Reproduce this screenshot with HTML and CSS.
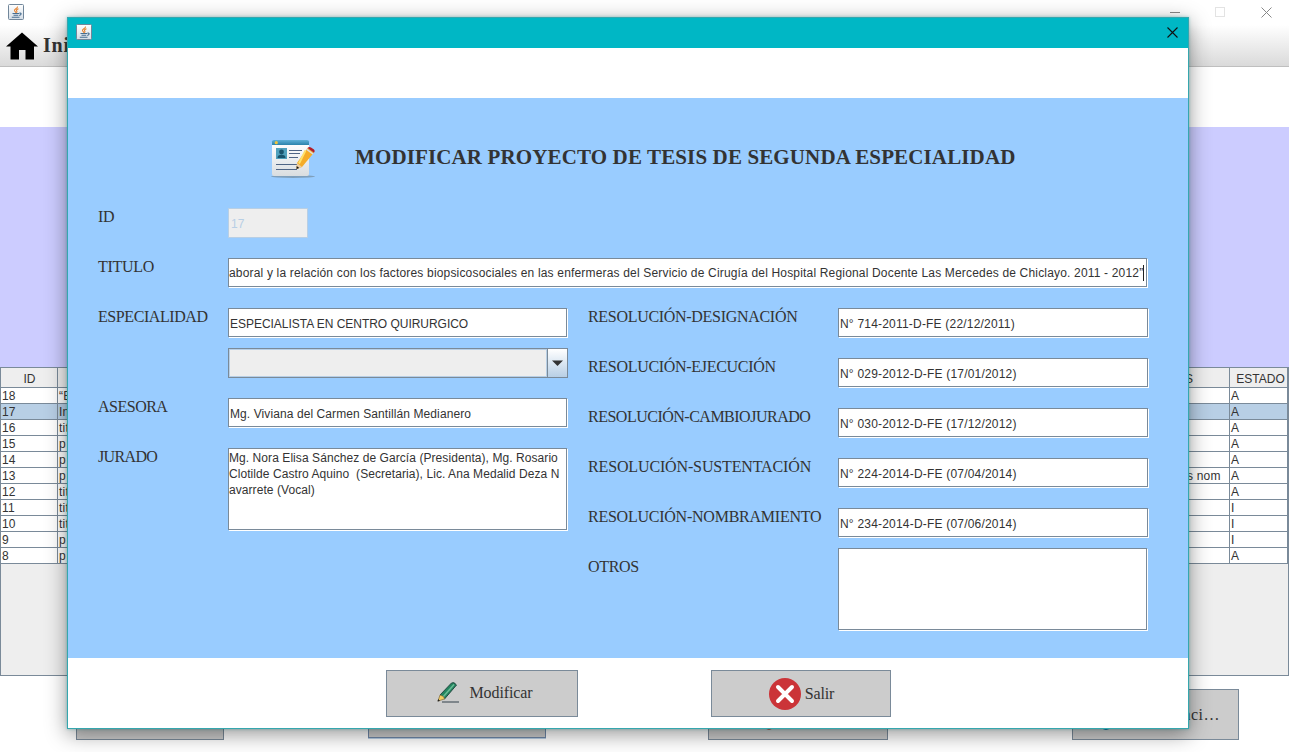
FILE: index.html
```html
<!DOCTYPE html>
<html lang="es">
<head>
<meta charset="utf-8">
<title>Modificar proyecto de tesis</title>
<link rel="stylesheet" href="styles.css">
</head>
<body>
<svg class="defs" width="0" height="0">
  <defs>
    <linearGradient id="cup" x1="0" y1="0" x2="0" y2="1"><stop offset="0" stop-color="#fff"/><stop offset="1" stop-color="#d4dde6"/></linearGradient>
    <linearGradient id="card" x1="0" y1="0" x2="0" y2="1"><stop offset="0" stop-color="#fff"/><stop offset="1" stop-color="#d9dde0"/></linearGradient>
    <linearGradient id="bar" x1="0" y1="0" x2="0" y2="1"><stop offset="0" stop-color="#5fb0d8"/><stop offset="1" stop-color="#2b83ab"/></linearGradient>
    <symbol id="java" viewBox="0 0 16 16">
      <rect x=".5" y=".5" width="15" height="15" rx="1" fill="url(#cup)" stroke="#71869a"/>
      <path d="M9.5 2.5C10 4.500 6 5 6.500 6.500C6.700 7.500 8 8 8 9M10.500 4.800C8.500 5.500 8 6.300 8.800 7C9.300 7.600 8.900 8 8.500 8.500" fill="none" stroke="#e5812f" stroke-width="1.100"/>
      <path d="M4.500 9.500H11M5.500 11.300H10.300M3.800 13.200H11.500M11.300 9.300C14 8.500 13.500 11 11.200 11.500" fill="none" stroke="#476e91" stroke-width="1.100"/>
    </symbol>
  </defs>
</svg>
<div class="desktop">
  <header class="main-title">
    <svg width="16" height="16"><use href="#java"/></svg>
    <svg class="controls" width="110" height="16" viewBox="0 0 110 16"><path d="M3 9.500H13M94.500 4.500L104.500 14.500M104.500 4.500L94.500 14.500" fill="none" stroke="#888"/><rect x="48.500" y="4.500" width="9" height="9" fill="none" stroke="#e3e3e3"/></svg>
  </header>
  <nav class="toolbar">
    <svg width="32" height="28" viewBox="0 0 32 28"><path d="M16 .5L32 14.500H28V27.500H19.500V18H13V27.500H4.500V14.500H0Z"/></svg>
    <span>Inicio</span>
  </nav>
  <div class="blank"></div>
  <div class="lavender"></div>
  <div class="table-pane">
    <table>
      <colgroup><col class="c-id"><col><col class="c-obs"><col class="c-state"></colgroup>
      <thead><tr><th>ID</th><th></th><th class="obs">S</th><th class="state">ESTADO</th></tr></thead>
      <tbody>
        <tr><td>18</td><td>“E</td><td></td><td>A</td></tr>
        <tr class="selected"><td>17</td><td>In</td><td></td><td>A</td></tr>
        <tr><td>16</td><td>tit</td><td></td><td>A</td></tr>
        <tr><td>15</td><td>p</td><td></td><td>A</td></tr>
        <tr><td>14</td><td>p</td><td></td><td>A</td></tr>
        <tr><td>13</td><td>p</td><td class="obs">s nom</td><td>A</td></tr>
        <tr><td>12</td><td>tit</td><td></td><td>A</td></tr>
        <tr><td>11</td><td>tit</td><td></td><td>I</td></tr>
        <tr><td>10</td><td>tit</td><td></td><td>I</td></tr>
        <tr><td>9</td><td>p</td><td></td><td>I</td></tr>
        <tr><td>8</td><td>p</td><td></td><td>A</td></tr>
      </tbody>
    </table>
  </div>
  <footer class="main-actions">
    <div class="back-btn b1"></div>
    <div class="back-btn b2"></div>
    <div class="back-btn b3"><svg width="12" height="41"><ellipse cx="6" cy="31" rx="6" ry="9" fill="#bc473b"/></svg></div>
    <div class="back-btn b4"><svg width="14" height="41"><ellipse cx="7" cy="31" rx="7" ry="9" fill="#08739e"/></svg><span>nci…</span></div>
  </footer>
</div>

<main class="dialog">
  <header class="dialog-title">
    <svg width="16" height="16"><use href="#java"/></svg>
    <svg width="11" height="11" viewBox="0 0 11 11"><path d="M.5.5L10.500 10.500M10.500.5L.5 10.500" stroke="#111" stroke-width="1.100"/></svg>
  </header>
  <section class="form">
    <div class="heading">
      <svg width="46" height="41" viewBox="0 -1 46 41">
        <ellipse cx="22" cy="37.500" rx="22" ry="1.500" fill="#718797" opacity=".65"/>
        <path d="M1 4H38V35Q38 37 36 37H3Q1 37 1 35Z" fill="url(#card)"/>
        <path d="M1 6V2.500Q1 1 3 1H36Q38 1 38 2.500V6Z" fill="url(#bar)"/>
        <circle cx="5.300" cy="3.700" r="1.600" fill="#f1c33b"/>
        <rect x="5" y="9" width="11" height="11" fill="#50a1bd"/>
        <circle cx="10.500" cy="13" r="2.400" fill="#19546d"/><path d="M6.500 19Q6.500 15.800 10.500 15.800T14.500 19Z" fill="#19546d"/>
        <path d="M18 11.500H31M18 14.500H29M18 18.500H27M5 25.500H26M5 30.500H26" stroke="#4f6585" stroke-width="1.100"/>
        <path d="M36.500 9L43 13.500L31 28L25.500 30L26 24Z" fill="#f5ac28"/>
        <path d="M34.500 11.400L28 24.500" stroke="#ffe16a" stroke-width="2"/>
        <path d="M26 24L31 28L25.500 30Z" fill="#edcda0"/><path d="M25.700 27L28.300 29L25.500 30Z" fill="#111"/>
        <path d="M36.500 9Q38 7.500 40 8.500L43 10.500Q44.500 12 43 13.800Z" fill="#b51d27"/><path d="M35.500 10.200L42 15" stroke="#ddd" stroke-width="1.500"/>
      </svg>
      <h1>MODIFICAR PROYECTO DE TESIS DE SEGUNDA ESPECIALIDAD</h1>
    </div>
    <div class="row"><label>ID</label><div class="field disabled">17</div></div>
    <div class="row"><label>TITULO</label><div class="field title-field"><span>aboral y la relación con los factores biopsicosociales en las enfermeras del Servicio de Cirugía del Hospital Regional Docente Las Mercedes de Chiclayo. 2011 - 2012”</span><i class="caret"></i></div></div>
    <div class="columns">
      <div class="left">
        <div class="row short"><label class="tight">ESPECIALIDAD</label><div class="field caps">ESPECIALISTA EN CENTRO QUIRURGICO</div></div>
        <div class="row combo-row"><div class="combo"><div class="combo-value"></div><div class="combo-arrow"><svg width="11" height="6" viewBox="0 0 11 6"><path d="M0 .5H11L5.500 6Z" fill="#333"/></svg></div></div></div>
        <div class="row"><label class="tighter">ASESORA</label><div class="field advisor">Mg. Viviana del Carmen Santillán Medianero</div></div>
        <div class="row"><label class="tightest">JURADO</label><div class="field area"><span>Mg. Nora Elisa Sánchez de García (Presidenta), Mg. Rosario</span><span>Clotilde Castro Aquino&nbsp; (Secretaria), Lic. Ana Medalid Deza N</span><span>avarrete (Vocal)</span></div></div>
      </div>
      <div class="right">
        <div class="row"><label>RESOLUCIÓN-DESIGNACIÓN</label><div class="field">N° 714-2011-D-FE (22/12/2011)</div></div>
        <div class="row"><label>RESOLUCIÓN-EJECUCIÓN</label><div class="field">N° 029-2012-D-FE (17/01/2012)</div></div>
        <div class="row"><label class="tighter">RESOLUCIÓN-CAMBIOJURADO</label><div class="field">N° 030-2012-D-FE (17/12/2012)</div></div>
        <div class="row"><label class="loose">RESOLUCIÓN-SUSTENTACIÓN</label><div class="field">N° 224-2014-D-FE (07/04/2014)</div></div>
        <div class="row last"><label class="slight">RESOLUCIÓN-NOMBRAMIENTO</label><div class="field">N° 234-2014-D-FE (07/06/2014)</div></div>
        <div class="row others"><label>OTROS</label><div class="field area"></div></div>
      </div>
    </div>
  </section>
  <footer class="dialog-actions">
    <button class="modify" type="button"><svg width="24" height="24" viewBox="0 0 24 24"><path d="M6 21H23" stroke="#777e84" stroke-width="1.800"/><path d="M4 14L15.500 2Q18 .5 20.500 4L8.500 18Z" fill="#23845f" stroke="#244b43"/><path d="M7 16L18 3.500" stroke="#69bc96" stroke-width="1.500"/><path d="M4 14L2 20L8.500 18L7.500 15.500Z" fill="#f4ce62" stroke="#826b36" stroke-width=".7"/><path d="M2.200 18L1.500 20.500L4 20Z" fill="#222"/></svg><span>Modificar</span></button>
    <button class="exit" type="button"><svg width="32" height="32" viewBox="0 0 32 32"><circle cx="16" cy="16" r="16" fill="#cb3438"/><path d="M9 9L23 23M23 9L9 23" stroke="#fff" stroke-width="4" stroke-linecap="round"/></svg><span>Salir</span></button>
  </footer>
</main>
</body>
</html>
```
FILE: styles.css
```css
* { box-sizing: border-box; }
body { margin: 0; width: 1289px; height: 752px; overflow: hidden; position: relative; background: #fff; color: #333; font-family: "Liberation Sans", Arial, sans-serif; font-size: 12px; }
svg { display: block; flex: none; }
.defs { position: absolute; }
.desktop { height: 752px; display: flex; flex-direction: column; }
.main-title { height: 25px; flex: none; display: flex; justify-content: space-between; padding: 4px 12px 0 8px; }
.controls { margin-top: -1px; }
.toolbar { height: 42px; flex: none; display: flex; padding: 7px 0 0 6px; gap: 5px; background: linear-gradient(#fff, #dadada); border-bottom: 1px solid #bfbfbf; font: bold 20px/26px "Liberation Serif", serif; letter-spacing: .8px; }
.blank { height: 60px; flex: none; }
.lavender { height: 240px; flex: none; background: #ccf; }
.table-pane { height: 309px; flex: none; border: 1px solid #7a8a99; background: #eee; }
table { width: 1287px; table-layout: fixed; border-collapse: separate; border-spacing: 0; }
.c-id { width: 57px; }
.c-obs { width: 100px; }
.c-state { width: 58px; }
th { height: 20px; padding: 2px 0 0 1px; font-weight: normal; background: #eee; border-right: 1px solid #7a8a99; border-bottom: 1px solid #7a8a99; text-align: center; }
th.state { padding-left: 4px; }
td { height: 16px; padding: 1px 0 0 1px; line-height: 14px; background: #fff; border-right: 1px solid #7a8a99; border-bottom: 1px solid #7a8a99; white-space: nowrap; letter-spacing: .2px; }
.selected td { background: #b8cfe5; }
th.obs { text-align: right; padding-right: 36px; }
td.obs { padding-left: 57px; }
.main-actions { display: flex; padding: 13px 50px 0 76px; }
.back-btn { height: 51px; background: #ccc; border: 1px solid #7a8a99; }
.b1 { width: 148px; margin-right: 144px; }
.b2 { width: 178px; height: 49px; margin-right: 162px; border-color: #7088a8; box-shadow: 0 1px #b8cfe5; }
.b3 { width: 180px; margin-right: 184px; padding-left: 54px; }
.b4 { width: 167px; display: flex; justify-content: space-between; padding: 0 18px 0 26px; font: 16px/49px "Liberation Serif", serif; letter-spacing: .5px; }
.dialog { position: absolute; left: 67px; top: 17px; width: 1122px; height: 712px; border: 1px solid #35a7ae; background: #fff; display: flex; flex-direction: column; box-shadow: 0 5px 20px rgba(0,0,0,.42), 0 0 3px rgba(0,160,170,.4); }
.dialog-title { height: 30px; flex: none; background: #00b7c5; display: flex; justify-content: space-between; padding: 6px 10px 0 8px; }
.dialog-title svg + svg { margin-top: 3px; }
.form { margin-top: 50px; height: 560px; flex: none; background: #9cf; padding: 40px 40px 0 30px; }
.heading { height: 70px; display: flex; padding-left: 173px; gap: 38px; }
h1 { margin: 7px 0 0; font: bold 21px/24px "Liberation Serif", serif; white-space: nowrap; letter-spacing: .13px; }
.row { display: flex; height: 50px; }
label { width: 130px; flex: none; font: 16px/18px "Liberation Serif", serif; white-space: nowrap; letter-spacing: -.3px; }
.tight { letter-spacing: -.42px; }
.tighter { letter-spacing: -.5px; }
.tightest { letter-spacing: -.65px; }
.slight { letter-spacing: -.24px; }
.loose { letter-spacing: -.14px; }
.field { width: 339px; height: 29px; flex: none; background: #fff; border: 1px solid #7a8a99; box-shadow: 1px 1px #fff; padding: 1px 0 0 1px; line-height: 28px; white-space: nowrap; }
.disabled { width: 80px; height: 30px; background: #eee; border-color: #b8cfe5; color: #b8cfe5; padding-left: 2px; box-shadow: none; }
.title-field { width: 919px; display: flex; align-items: center; letter-spacing: .174px; padding-left: 0; }
.caret { width: 1px; height: 16px; flex: none; background: #222; }
.caps { letter-spacing: -.03px; }
.advisor { letter-spacing: .09px; }
.columns { display: flex; gap: 20px; }
.left { width: 470px; }
.short { height: 40px; }
.combo-row { padding-left: 130px; }
.combo { width: 340px; height: 30px; display: flex; border: 1px solid #7a8a99; }
.combo-value { flex: 1; background: #eee; border: 1px solid #b8cfe5; }
.combo-arrow { width: 20px; border-left: 1px solid #7a8a99; display: flex; align-items: center; justify-content: center; background: linear-gradient(#fff, #b8cfe5); }
.right label { width: 250px; }
.right .field { width: 310px; letter-spacing: .2px; }
.right .last { height: 40px; }
.others label { padding-top: 10px; }
.field.area { height: 82px; padding: 1px 0 0; line-height: 16px; letter-spacing: .07px; }
.right .field.area { width: 309px; }
.area span { display: block; }
.dialog-actions { display: flex; padding: 12px 0 0 318px; gap: 133px; }
button { height: 47px; padding: 0 0 1px; margin: 0; border: 1px solid #7a8a99; background: #ccc; color: #333; display: flex; align-items: center; justify-content: center; font: 16px/20px "Liberation Serif", serif; }
.modify { width: 192px; gap: 9px; padding-left: 5px; letter-spacing: -.1px; }
.exit { width: 180px; gap: 4px; padding: 0 0 0 1px; letter-spacing: -.1px; }
```
